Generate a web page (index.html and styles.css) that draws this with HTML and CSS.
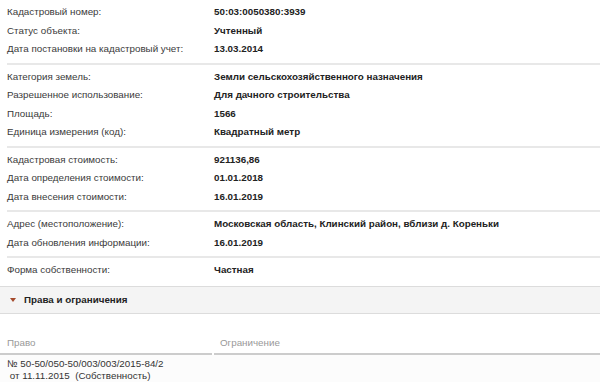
FILE: index.html
```html
<!DOCTYPE html>
<html lang="ru">
<head>
<meta charset="utf-8">
<link rel="stylesheet" href="styles.css">
</head>
<body>
<div class="page">
  <div class="section">
    <div class="row"><span class="label">Кадастровый номер:</span><span class="value">50:03:0050380:3939</span></div>
    <div class="row"><span class="label">Статус объекта:</span><span class="value">Учтенный</span></div>
    <div class="row"><span class="label">Дата постановки на кадастровый учет:</span><span class="value">13.03.2014</span></div>
  </div>
  <div class="section">
    <div class="row"><span class="label">Категория земель:</span><span class="value">Земли сельскохозяйственного назначения</span></div>
    <div class="row"><span class="label">Разрешенное использование:</span><span class="value">Для дачного строительства</span></div>
    <div class="row"><span class="label">Площадь:</span><span class="value">1566</span></div>
    <div class="row"><span class="label">Единица измерения (код):</span><span class="value">Квадратный метр</span></div>
  </div>
  <div class="section">
    <div class="row"><span class="label">Кадастровая стоимость:</span><span class="value">921136,86</span></div>
    <div class="row"><span class="label">Дата определения стоимости:</span><span class="value">01.01.2018</span></div>
    <div class="row"><span class="label">Дата внесения стоимости:</span><span class="value">16.01.2019</span></div>
  </div>
  <div class="section">
    <div class="row"><span class="label">Адрес (местоположение):</span><span class="value">Московская область, Клинский район, вблизи д. Кореньки</span></div>
    <div class="row"><span class="label">Дата обновления информации:</span><span class="value">16.01.2019</span></div>
  </div>
  <div class="section last">
    <div class="row"><span class="label">Форма собственности:</span><span class="value">Частная</span></div>
  </div>
  <div class="band">
    <span class="caret"></span><span class="band-title">Права и ограничения</span>
  </div>
  <div class="rights">
    <div class="rights-head">
      <div class="col col-right">Право</div>
      <div class="col col-limit">Ограничение</div>
    </div>
    <div class="rights-row">
      <div class="col col-right">№ 50-50/050-50/003/003/2015-84/2<br>&nbsp;от 11.11.2015&nbsp; (Собственность)</div>
      <div class="col col-limit"></div>
    </div>
  </div>
</div>
</body>
</html>
```
FILE: styles.css
```css
html, body {
  margin: 0;
  padding: 0;
  background: #ffffff;
}
body {
  font-family: "Liberation Sans", Arial, sans-serif;
  font-size: 9.8px;
  color: #333333;
}
.page {
  width: 600px;
  overflow: hidden;
}
.section {
  margin-left: 7px;
  padding: 3px 0 4px;
  border-bottom: 2px solid #e8e8e8;
}
.section.last {
  border-bottom: none;
  padding-bottom: 6px;
}
.row {
  display: flex;
  height: 18.5px;
  line-height: 18.5px;
}
.label {
  width: 207px;
  flex: none;
  color: #3a3a3a;
}
.value {
  font-weight: bold;
  color: #222222;
}
.band {
  display: flex;
  align-items: center;
  height: 26px;
  background: #f4f4f4;
  border-top: 1px solid #dcdcdc;
  border-bottom: 1px solid #dcdcdc;
  padding-left: 10px;
}
.caret {
  width: 0;
  height: 0;
  border-left: 3.5px solid transparent;
  border-right: 3.5px solid transparent;
  border-top: 4px solid #a44a2c;
  margin-right: 8px;
  margin-top: 1px;
}
.band-title {
  font-weight: bold;
  color: #222222;
}
.rights {
  padding-top: 20px;
}
.rights-head {
  display: flex;
  gap: 2px;
}
.rights-head .col {
  color: #999999;
  line-height: 18px;
  padding-bottom: 1px;
  border-bottom: 2px solid #cccccc;
}
.col-right {
  width: 205px;
  padding-left: 7px;
}
.col-limit {
  flex: 1;
  padding-left: 6px;
}
.rights-row {
  display: flex;
  gap: 2px;
  background: #fcfcfc;
  border-bottom: 1px solid #e0e0e0;
}
.rights-row .col {
  line-height: 12.5px;
  padding-top: 3px;
  color: #333333;
}
```
